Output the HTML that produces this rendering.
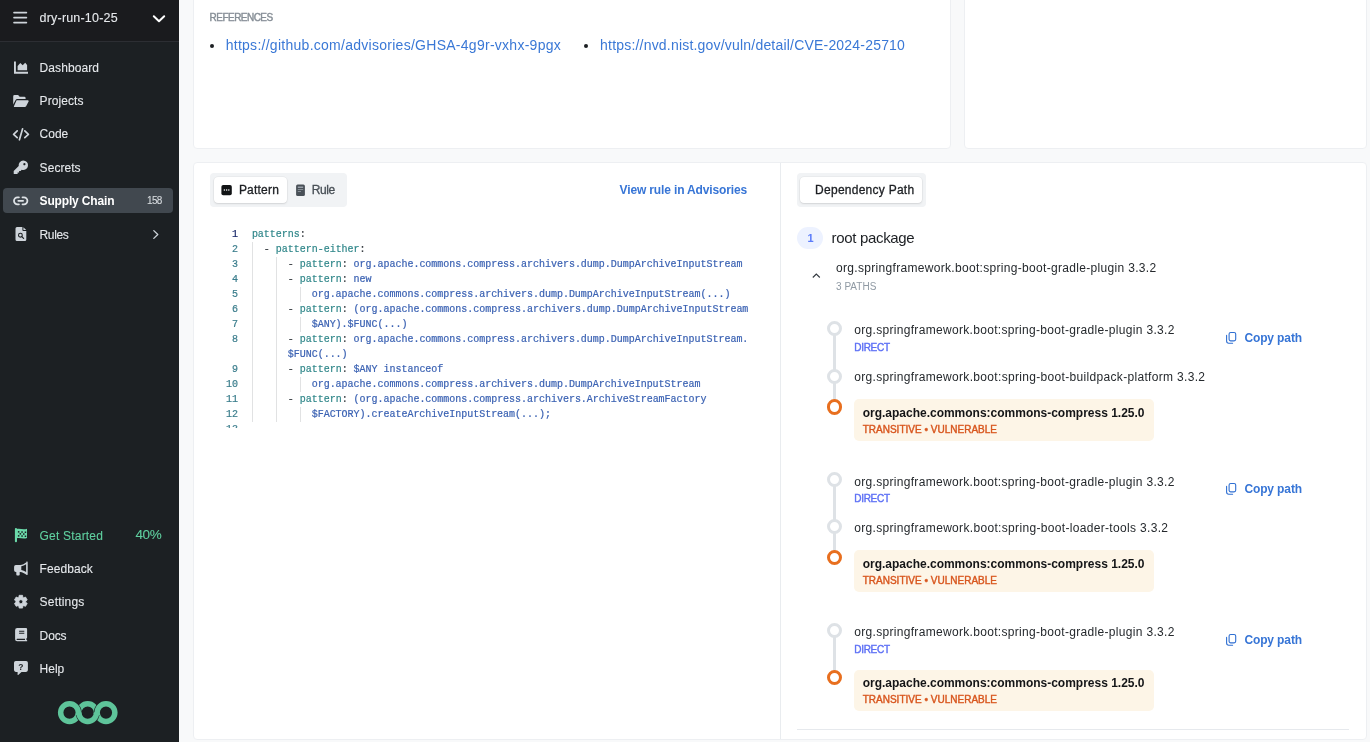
<!DOCTYPE html>
<html lang="en">
<head>
<meta charset="utf-8">
<title>Supply Chain</title>
<style>
*{box-sizing:border-box;margin:0;padding:0}
html,body{width:1370px;height:742px;overflow:hidden}
body{will-change:transform;background:#f8f9fa;font-family:"Liberation Sans",sans-serif;color:#1c1f23;position:relative}
.abs{position:absolute}
.t{position:absolute;white-space:nowrap}
#side{position:absolute;left:0;top:0;width:178.8px;height:742px;background:#1c2023}
#sidehead{position:absolute;left:0;top:0;width:178.8px;height:42px;background:#1a1b1e;border-bottom:1px solid #2c2e33}
.nv{color:#e6e9ec;-webkit-text-stroke:0.1px currentColor}
.nv.b{color:#fff;-webkit-text-stroke:0}
.nv.g{color:#5fcf9f}
.ico{position:absolute}
#active{position:absolute;left:3px;top:188px;width:170px;height:25px;border-radius:4px;background:#41484f}
.card{position:absolute;background:#fff;border:1px solid #edeff2;border-radius:4px}
.link{color:#3a78d6}
.blue{color:#3775d6}
.bul{position:absolute;width:4px;height:4px;border-radius:50%;background:#1c1f23}
.refs{color:#868e96}
.seg{position:absolute;background:#f1f3f5;border-radius:4px}
.segbtn{position:absolute;background:#fff;border-radius:4px;box-shadow:0 1px 2px rgba(0,0,0,.10),0 0 0 .5px rgba(0,0,0,.06)}
.tab{color:#1c1f23}
.med{-webkit-text-stroke:0.3px currentColor}
.semi{-webkit-text-stroke:0.4px currentColor}
.tab.rule{color:#495057}
#codebox{position:absolute;left:214px;top:227px;width:560px;height:201px;overflow:hidden}
.code{position:absolute;left:37.9px;margin-top:.3px;letter-spacing:-0.02px;font-family:"Liberation Mono",monospace;font-size:10px;line-height:15px;white-space:pre;color:#3b62b3;-webkit-text-stroke:0.2px currentColor}
.ln{position:absolute;left:0;margin-top:.3px;width:24px;text-align:right;font-family:"Liberation Mono",monospace;font-size:10px;line-height:15px;color:#3a7d8c;-webkit-text-stroke:0.2px currentColor}
.ln.cur{color:#1b2a6b}
.k{color:#30878a}
.p{color:#3c4146}
.guide{position:absolute;width:1px;background:#e1e2e3}
.pill{position:absolute;left:797px;top:227px;width:26px;height:22px;border-radius:11px;background:#edf2ff}
.one{color:#5c7cfa}
.root{color:#1c1f23}
.pk{color:#25292d}
.vb{color:#141517}
.paths{color:#909aa4}
.dir{color:#5c6ff5}
.vul{color:#d8561e}
.dot{position:absolute;left:826.5px;width:15px;height:15px;border-radius:50%;border:3px solid #dee2e6;background:#fff}
.dot.o{border-color:#e86f1f;border-width:3.4px;width:15.4px;height:15.4px;left:826.7px}
.vline{position:absolute;left:832.5px;width:3px;background:#dee2e6}
.vbox{position:absolute;left:854px;width:300px;height:41.5px;border-radius:5px;background:#fdf5e7}
</style>
</head>
<body>
<div id="side">
<div id="sidehead"></div>
<div id="active"></div>
<svg class="ico" style="left:0;top:0" width="179" height="742" viewBox="0 0 179 742">
<g fill="#ced4da" stroke="none">
<!-- hamburger -->
<g fill="#ced4da"><rect x="13.2" y="11.7" width="14" height="1.8" rx=".8"/><rect x="13.2" y="16.7" width="14" height="1.8" rx=".8"/><rect x="13.2" y="21.7" width="14" height="1.8" rx=".8"/></g>
<!-- chevron down -->
<path d="M153.8 16.2 L159 21.2 L164.2 16.2" fill="none" stroke="#fff" stroke-width="2" stroke-linecap="round" stroke-linejoin="round"/>
<!-- dashboard: chart area -->
<path d="M14 61.6 h1.9 v10.2 h12.1 v1.9 h-14 z"/>
<path d="M17.6 70.2 v-4.3 l2.7-2.9 l2.4 2.2 l2.5-2.4 l1.9 2.2 v5.2 z"/>
<!-- projects: folder open -->
<path d="M13.2 104.6 v-8.2 a1.3 1.3 0 0 1 1.3-1.3 h3.6 l1.6 1.6 h4.6 a1.3 1.3 0 0 1 1.3 1.3 v1.1 h-8.3 a1.9 1.9 0 0 0-1.7 1 z"/>
<path d="M16.9 100.3 h11 a.8.8 0 0 1 .7 1.2 l-2.5 4.7 a1.5 1.5 0 0 1-1.3.8 h-10.4 a.5.5 0 0 1-.45-.75 l2.3-5.3 a1 1 0 0 1 .65-.65 z"/>
<!-- code -->
<g fill="none" stroke="#ced4da" stroke-width="1.7" stroke-linecap="round" stroke-linejoin="round"><path d="M17.2 130.9 L13.6 134.3 L17.2 137.7"/><path d="M24.8 130.9 L28.4 134.3 L24.8 137.7"/><path d="M22.6 128.8 L19.4 139.8"/></g>
<!-- key -->
<path d="M23.2 160.4 a4.8 4.8 0 1 1-1.5 9.35 l-1.1 1.15 h-1.5 v1.5 h-1.5 v1.6 h-3.4 a.5.5 0 0 1-.5-.5 v-2.6 l5-5 a4.8 4.8 0 0 1 4.5-5.5 z M24.4 163 a1.1 1.1 0 1 0 .01 0 z" fill-rule="evenodd"/>
<!-- link -->
<g fill="none" stroke="#dee2e6" stroke-width="1.8" stroke-linecap="round"><path d="M18.9 197.300 h-1.400 a3.500 3.500 0 0 0 0 7 h1.400"/><path d="M22.500 197.300 h1.400 a3.500 3.500 0 0 1 0 7 h-1.400"/><path d="M18.300 200.800 h4.800"/></g>
<!-- rules: file search -->
<path d="M17 227 h5.4 v3.1 a.9.9 0 0 0 .9.9 h3 v8.6 a1.5 1.5 0 0 1-1.5 1.5 h-7.8 a1.5 1.5 0 0 1-1.5-1.5 v-11.1 a1.5 1.5 0 0 1 1.5-1.5 z M23.4 227.2 l2.8 2.8 h-2.8 z"/>
<circle cx="20.4" cy="235.2" r="1.9" fill="none" stroke="#1c2023" stroke-width="1.1"/><path d="M21.8 236.6 L23.6 238.4" stroke="#1c2023" stroke-width="1.2" stroke-linecap="round"/>
<!-- chevron right -->
<path d="M153.8 230.6 L157.8 234.5 L153.8 238.4" fill="none" stroke="#ced4da" stroke-width="1.3" stroke-linecap="round" stroke-linejoin="round"/>
<!-- flag checkered -->
<g fill="#6bd8a9"><rect x="14.9" y="527.9" width="2.1" height="14.3" rx="1"/><path d="M16.5 529.1 c3.2-1.300 6.300 1.200 10.500-.4 v9.300 c-4.200 1.600-7.300-.9-10.500.4 z"/></g>
<g fill="#1c2023"><rect x="17.900" y="531.100" width="1.500" height="1.500"/><rect x="21.300" y="531.300" width="1.500" height="1.500"/><rect x="24.700" y="531.500" width="1.500" height="1.500"/><rect x="19.600" y="533.100" width="1.500" height="1.500"/><rect x="23" y="533.300" width="1.500" height="1.500"/><rect x="17.900" y="535.100" width="1.500" height="1.500"/><rect x="21.300" y="535.300" width="1.500" height="1.500"/><rect x="24.700" y="535.500" width="1.500" height="1.500"/></g>
<!-- megaphone -->
<path d="M26.400 561.600 a.8.8 0 0 1 1.300.6 v12 a.8.8 0 0 1-1.300.6 c-1.900-1.600-4-2.500-6.300-2.800 h-.4 v2.500 a.9.9 0 0 1-.9.9 h-1.600 a.9.9 0 0 1-.9-.9 v-2.500 h-.5 a1.700 1.700 0 0 1-1.700-1.700 v-3.600 a1.700 1.700 0 0 1 1.700-1.700 h4.300 c2.300-.3 4.400-1.200 6.300-2.800 z M26.100 564.300 c-1.500 1-3.100 1.700-4.800 2 v3.800 c1.700.3 3.300 1 4.800 2 z" fill-rule="evenodd"/>
<!-- gear -->
<path d="M22.84 597.22 L22.56 595.32 L19.14 595.32 L18.86 597.22 L17.97 597.74 L16.18 597.03 L14.47 599.99 L15.98 601.19 L15.98 602.21 L14.47 603.41 L16.18 606.37 L17.97 605.66 L18.86 606.18 L19.14 608.08 L22.56 608.08 L22.84 606.18 L23.73 605.66 L25.52 606.37 L27.23 603.41 L25.72 602.21 L25.72 601.19 L27.23 599.99 L25.52 597.03 L23.73 597.74 z M18.85 601.70 a2 2 0 1 0 4 0 a2 2 0 1 0 -4 0 z" fill-rule="evenodd" stroke="#ced4da" stroke-width=".8" stroke-linejoin="round"/>
<!-- docs: book -->
<path d="M17.2 628.1 h8.800 a1.100 1.100 0 0 1 1.100 1.100 v8.400 a1.100 1.100 0 0 1-.7 1 v1.400 h.2 a.65.65 0 0 1 0 1.300 h-9.400 a2.100 2.100 0 0 1-2.100-2.100 v-9 a2.100 2.100 0 0 1 2.100-2.100 z M17.200 638.800 a.6.6 0 0 0 0 1.200 h7.800 v-1.200 z M19.100 630.700 v1.100 h5.200 v-1.100 z M19.100 632.700 v1.100 h5.200 v-1.100 z" fill-rule="evenodd"/>
<!-- help: bubble question -->
<path d="M15.8 660.9 h10.3 a1.8 1.8 0 0 1 1.8 1.8 v7.4 a1.8 1.8 0 0 1-1.8 1.8 h-4.6 l-3.3 3 a.35.35 0 0 1-.6-.25 v-2.75 h-1.8 a1.8 1.8 0 0 1-1.8-1.8 v-7.4 a1.8 1.8 0 0 1 1.8-1.8 z"/>
</g>
<text x="20.9" y="669.9" text-anchor="middle" font-family="Liberation Sans, sans-serif" font-weight="bold" font-size="8.5" fill="#1c2023">?</text>
<!-- logo -->
<g fill="none" stroke-width="5.5" stroke="#5ec49a">
<circle cx="87.7" cy="712.6" r="8.85"/>
<circle cx="69.5" cy="712.6" r="8.85" stroke="#1c2023" stroke-width="6.7"/>
<circle cx="106" cy="712.6" r="8.85" stroke="#1c2023" stroke-width="6.7"/>
<circle cx="69.5" cy="712.6" r="8.85"/>
<circle cx="106" cy="712.6" r="8.85"/>
<path d="M96.36 714.44 A8.85 8.85 0 0 1 79.04 714.44" stroke="#1c2023" stroke-width="6.7"/>
<path d="M96.55 712.20 V712.6 A8.85 8.85 0 0 1 78.85 712.60 V712.20"/>
</g>
</svg>

<div class="t nv" style="left:39.6px;top:9.5px;font-size:12.5px;line-height:16px;letter-spacing:0.189px;">dry-run-10-25</div>
<div class="t nv" style="left:39.6px;top:59.5px;font-size:12px;line-height:16px;letter-spacing:0.073px;">Dashboard</div>
<div class="t nv" style="left:39.6px;top:92.5px;font-size:12px;line-height:16px;letter-spacing:0.077px;">Projects</div>
<div class="t nv" style="left:39.6px;top:126px;font-size:12px;line-height:16px;letter-spacing:-0.029px;">Code</div>
<div class="t nv" style="left:39.6px;top:159.5px;font-size:12px;line-height:16px;letter-spacing:0.052px;">Secrets</div>
<div class="t nv b" style="left:39.6px;top:193px;font-size:12px;line-height:16px;font-weight:bold;letter-spacing:-0.161px;">Supply Chain</div>
<div class="t nv" style="left:39.6px;top:226.5px;font-size:12px;line-height:16px;letter-spacing:-0.397px;">Rules</div>
<div class="t nv" style="left:147px;top:195px;font-size:10px;line-height:12px;letter-spacing:-0.644px;color:#d5d9dd;">158</div>
<div class="t nv g" style="left:39.6px;top:527.5px;font-size:12px;line-height:16px;letter-spacing:0.192px;">Get Started</div>
<div class="t nv g" style="left:135.4px;top:526px;font-size:13.5px;line-height:18px;letter-spacing:-0.316px;">40%</div>
<div class="t nv" style="left:39.6px;top:560.5px;font-size:12px;line-height:16px;letter-spacing:0.071px;">Feedback</div>
<div class="t nv" style="left:39.6px;top:594px;font-size:12px;line-height:16px;letter-spacing:0.192px;">Settings</div>
<div class="t nv" style="left:39.6px;top:627.5px;font-size:12px;line-height:16px;letter-spacing:-0.115px;">Docs</div>
<div class="t nv" style="left:39.6px;top:660.5px;font-size:12px;line-height:16px;letter-spacing:0.004px;">Help</div>
</div>
<div class="card" style="left:192.5px;top:-10px;width:758.3px;height:158.8px"></div>
<div class="card" style="left:963.6px;top:-10px;width:403.3px;height:158.8px"></div>
<div class="card" style="left:192.5px;top:162px;width:1174.4px;height:578px"></div>
<div class="abs" style="left:780px;top:163px;width:1px;height:576px;background:#e9ecef"></div>
<div class="t refs semi" style="left:209.6px;top:11.5px;font-size:10px;line-height:12px;letter-spacing:-0.529px;">REFERENCES</div>
<div class="bul" style="left:209.5px;top:43.5px"></div>
<div class="t link" style="left:225.7px;top:35.5px;font-size:14px;line-height:18px;letter-spacing:0.27px;">https://github.com/advisories/GHSA-4g9r-vxhx-9pgx</div>
<div class="bul" style="left:584.2px;top:43.5px"></div>
<div class="t link" style="left:600.1px;top:35.5px;font-size:14px;line-height:18px;letter-spacing:0.197px;">https://nvd.nist.gov/vuln/detail/CVE-2024-25710</div>
<div class="seg" style="left:210px;top:173px;width:137.3px;height:33.9px"></div>
<div class="segbtn" style="left:213.5px;top:176.7px;width:73.8px;height:26.7px"></div>
<svg class="abs" style="left:221px;top:184px" width="12" height="12" viewBox="0 0 12 12"><rect x=".4" y="1" width="10.4" height="10.2" rx="1.8" fill="#111315"/><circle cx="3.4" cy="6.1" r=".75" fill="#fff"/><circle cx="5.6" cy="6.1" r=".75" fill="#fff"/><circle cx="7.8" cy="6.1" r=".75" fill="#fff"/></svg>
<svg class="abs" style="left:295px;top:184px" width="11" height="13" viewBox="0 0 11 13"><rect x="1.1" y=".4" width="8.8" height="11.5" rx="1.5" fill="#495057"/><rect x="2.8" y="2.6" width="5.4" height="1.2" fill="#adb5bd"/><rect x="2.8" y="5" width="5.4" height="1" fill="#868e96"/><rect x="2.8" y="7" width="3.2" height="1" fill="#868e96"/></svg>
<div class="t tab med" style="left:238.9px;top:182px;font-size:12px;line-height:16px;letter-spacing:0.216px;">Pattern</div>
<div class="t tab med rule" style="left:311.8px;top:182px;font-size:12px;line-height:16px;letter-spacing:-0.396px;">Rule</div>
<div class="t blue" style="left:619.6px;top:182px;font-size:12px;line-height:16px;font-weight:bold;letter-spacing:-0.146px;">View rule in Advisories</div>
<div class="seg" style="left:796.9px;top:173px;width:128.7px;height:33.9px"></div>
<div class="segbtn" style="left:800px;top:176.7px;width:122.3px;height:26.7px"></div>
<div class="t tab med" style="left:815.1px;top:182px;font-size:12px;line-height:16px;letter-spacing:0.257px;">Dependency Path</div>
<div id="codebox">
<div class="ln cur" style="top:0px">1</div>
<div class="code" style="top:0px"><span class="k">patterns</span><span class="p">:</span></div>
<div class="ln" style="top:15px">2</div>
<div class="code" style="top:15px">  <span class="p">- </span><span class="k">pattern-either</span><span class="p">:</span></div>
<div class="guide" style="left:38px;top:15px;height:15px"></div>
<div class="ln" style="top:30px">3</div>
<div class="code" style="top:30px">      <span class="p">- </span><span class="k">pattern</span><span class="p">: </span>org.apache.commons.compress.archivers.dump.DumpArchiveInputStream</div>
<div class="guide" style="left:38px;top:30px;height:15px"></div>
<div class="guide" style="left:62px;top:30px;height:15px"></div>
<div class="ln" style="top:45px">4</div>
<div class="code" style="top:45px">      <span class="p">- </span><span class="k">pattern</span><span class="p">: </span>new</div>
<div class="guide" style="left:38px;top:45px;height:15px"></div>
<div class="guide" style="left:62px;top:45px;height:15px"></div>
<div class="ln" style="top:60px">5</div>
<div class="code" style="top:60px">          org.apache.commons.compress.archivers.dump.DumpArchiveInputStream(...)</div>
<div class="guide" style="left:38px;top:60px;height:15px"></div>
<div class="guide" style="left:62px;top:60px;height:15px"></div>
<div class="guide" style="left:86px;top:60px;height:15px"></div>
<div class="ln" style="top:75px">6</div>
<div class="code" style="top:75px">      <span class="p">- </span><span class="k">pattern</span><span class="p">: </span>(org.apache.commons.compress.archivers.dump.DumpArchiveInputStream</div>
<div class="guide" style="left:38px;top:75px;height:15px"></div>
<div class="guide" style="left:62px;top:75px;height:15px"></div>
<div class="ln" style="top:90px">7</div>
<div class="code" style="top:90px">          $ANY).$FUNC(...)</div>
<div class="guide" style="left:38px;top:90px;height:15px"></div>
<div class="guide" style="left:62px;top:90px;height:15px"></div>
<div class="guide" style="left:86px;top:90px;height:15px"></div>
<div class="ln" style="top:105px">8</div>
<div class="code" style="top:105px">      <span class="p">- </span><span class="k">pattern</span><span class="p">: </span>org.apache.commons.compress.archivers.dump.DumpArchiveInputStream.</div>
<div class="guide" style="left:38px;top:105px;height:15px"></div>
<div class="guide" style="left:62px;top:105px;height:15px"></div>
<div class="ln" style="top:120px"></div>
<div class="code" style="top:120px">      $FUNC(...)</div>
<div class="guide" style="left:38px;top:120px;height:15px"></div>
<div class="guide" style="left:62px;top:120px;height:15px"></div>
<div class="ln" style="top:135px">9</div>
<div class="code" style="top:135px">      <span class="p">- </span><span class="k">pattern</span><span class="p">: </span>$ANY instanceof</div>
<div class="guide" style="left:38px;top:135px;height:15px"></div>
<div class="guide" style="left:62px;top:135px;height:15px"></div>
<div class="ln" style="top:150px">10</div>
<div class="code" style="top:150px">          org.apache.commons.compress.archivers.dump.DumpArchiveInputStream</div>
<div class="guide" style="left:38px;top:150px;height:15px"></div>
<div class="guide" style="left:62px;top:150px;height:15px"></div>
<div class="guide" style="left:86px;top:150px;height:15px"></div>
<div class="ln" style="top:165px">11</div>
<div class="code" style="top:165px">      <span class="p">- </span><span class="k">pattern</span><span class="p">: </span>(org.apache.commons.compress.archivers.ArchiveStreamFactory</div>
<div class="guide" style="left:38px;top:165px;height:15px"></div>
<div class="guide" style="left:62px;top:165px;height:15px"></div>
<div class="ln" style="top:180px">12</div>
<div class="code" style="top:180px">          $FACTORY).createArchiveInputStream(...);</div>
<div class="guide" style="left:38px;top:180px;height:15px"></div>
<div class="guide" style="left:62px;top:180px;height:15px"></div>
<div class="guide" style="left:86px;top:180px;height:15px"></div>
<div class="ln" style="top:195px">13</div>
</div>
<div class="pill"></div>
<div class="t one" style="left:807.6px;top:229.7px;font-size:11px;line-height:16px;font-weight:bold;">1</div>
<div class="t root" style="left:831.5px;top:227.5px;font-size:15px;line-height:20px;letter-spacing:-0.321px;">root package</div>
<svg class="abs" style="left:811px;top:271px" width="11" height="9" viewBox="0 0 11 9"><path d="M1.8 6.5 L5.3 3 L8.8 6.5" fill="none" stroke="#343a40" stroke-width="1.1"/></svg>
<div class="t pk" style="left:836px;top:260.3px;font-size:12px;line-height:16px;letter-spacing:0.314px;">org.springframework.boot:spring-boot-gradle-plugin 3.3.2</div>
<div class="t paths" style="left:836px;top:280.6px;font-size:10px;line-height:12px;letter-spacing:0.033px;">3 PATHS</div>
<div class="t pk" style="left:854.2px;top:321.8px;font-size:12px;line-height:16px;letter-spacing:0.316px;">org.springframework.boot:spring-boot-gradle-plugin 3.3.2</div>
<div class="t dir semi" style="left:854.2px;top:342.2px;font-size:10px;line-height:12px;letter-spacing:-0.267px;">DIRECT</div>
<svg class="abs" style="left:1224px;top:331.1px" width="14" height="14" viewBox="0 0 14 14"><rect x="5.1" y="1.5" width="6.6" height="8.4" rx="1.6" fill="none" stroke="#2f6fd2" stroke-width="1.1"/><path d="M2.6 4.4 V10 A2.2 2.2 0 0 0 4.8 12.2 H8.6" fill="none" stroke="#2f6fd2" stroke-width="1.1" stroke-linecap="round"/></svg>
<div class="t blue" style="left:1244.4px;top:330.3px;font-size:12px;line-height:16px;font-weight:bold;letter-spacing:-0.121px;">Copy path</div>
<div class="vline" style="top:328.9px;height:78px"></div>
<div class="dot" style="top:321.4px"></div>
<div class="dot" style="top:368.6px"></div>
<div class="t pk" style="left:854.2px;top:368.9px;font-size:12px;line-height:16px;letter-spacing:0.322px;">org.springframework.boot:spring-boot-buildpack-platform 3.3.2</div>
<div class="dot o" style="top:399.2px"></div>
<div class="vbox" style="top:399.4px"></div>
<div class="t vb" style="left:862.7px;top:404.8px;font-size:12px;line-height:16px;font-weight:bold;letter-spacing:-0.007px;">org.apache.commons:commons-compress 1.25.0</div>
<div class="t vul semi" style="left:862.7px;top:423.7px;font-size:10px;line-height:12px;letter-spacing:0.009px;">TRANSITIVE • VULNERABLE</div>
<div class="t pk" style="left:854.2px;top:473.5px;font-size:12px;line-height:16px;letter-spacing:0.316px;">org.springframework.boot:spring-boot-gradle-plugin 3.3.2</div>
<div class="t dir semi" style="left:854.2px;top:493px;font-size:10px;line-height:12px;letter-spacing:-0.267px;">DIRECT</div>
<svg class="abs" style="left:1224px;top:481.9px" width="14" height="14" viewBox="0 0 14 14"><rect x="5.1" y="1.5" width="6.6" height="8.4" rx="1.6" fill="none" stroke="#2f6fd2" stroke-width="1.1"/><path d="M2.6 4.4 V10 A2.2 2.2 0 0 0 4.8 12.2 H8.6" fill="none" stroke="#2f6fd2" stroke-width="1.1" stroke-linecap="round"/></svg>
<div class="t blue" style="left:1244.4px;top:481.1px;font-size:12px;line-height:16px;font-weight:bold;letter-spacing:-0.121px;">Copy path</div>
<div class="vline" style="top:479.7px;height:78px"></div>
<div class="dot" style="top:472.2px"></div>
<div class="dot" style="top:519.4px"></div>
<div class="t pk" style="left:854.2px;top:520.3px;font-size:12px;line-height:16px;letter-spacing:0.327px;">org.springframework.boot:spring-boot-loader-tools 3.3.2</div>
<div class="dot o" style="top:550px"></div>
<div class="vbox" style="top:550.2px"></div>
<div class="t vb" style="left:862.7px;top:555.6px;font-size:12px;line-height:16px;font-weight:bold;letter-spacing:-0.007px;">org.apache.commons:commons-compress 1.25.0</div>
<div class="t vul semi" style="left:862.7px;top:574.5px;font-size:10px;line-height:12px;letter-spacing:0.009px;">TRANSITIVE • VULNERABLE</div>
<div class="t pk" style="left:854.2px;top:624.1px;font-size:12px;line-height:16px;letter-spacing:0.316px;">org.springframework.boot:spring-boot-gradle-plugin 3.3.2</div>
<div class="t dir semi" style="left:854.2px;top:643.6px;font-size:10px;line-height:12px;letter-spacing:-0.267px;">DIRECT</div>
<svg class="abs" style="left:1224px;top:632.5px" width="14" height="14" viewBox="0 0 14 14"><rect x="5.1" y="1.5" width="6.6" height="8.4" rx="1.6" fill="none" stroke="#2f6fd2" stroke-width="1.1"/><path d="M2.6 4.4 V10 A2.2 2.2 0 0 0 4.8 12.2 H8.6" fill="none" stroke="#2f6fd2" stroke-width="1.1" stroke-linecap="round"/></svg>
<div class="t blue" style="left:1244.4px;top:631.7px;font-size:12px;line-height:16px;font-weight:bold;letter-spacing:-0.121px;">Copy path</div>
<div class="vline" style="top:630.3px;height:47px"></div>
<div class="dot" style="top:622.8px"></div>
<div class="dot o" style="top:669.6px"></div>
<div class="vbox" style="top:669.8px"></div>
<div class="t vb" style="left:862.7px;top:675.2px;font-size:12px;line-height:16px;font-weight:bold;letter-spacing:-0.007px;">org.apache.commons:commons-compress 1.25.0</div>
<div class="t vul semi" style="left:862.7px;top:694.1px;font-size:10px;line-height:12px;letter-spacing:0.009px;">TRANSITIVE • VULNERABLE</div>
<div class="abs" style="left:797px;top:729px;width:552px;height:1px;background:#e6e9ed"></div>
</body>
</html>
